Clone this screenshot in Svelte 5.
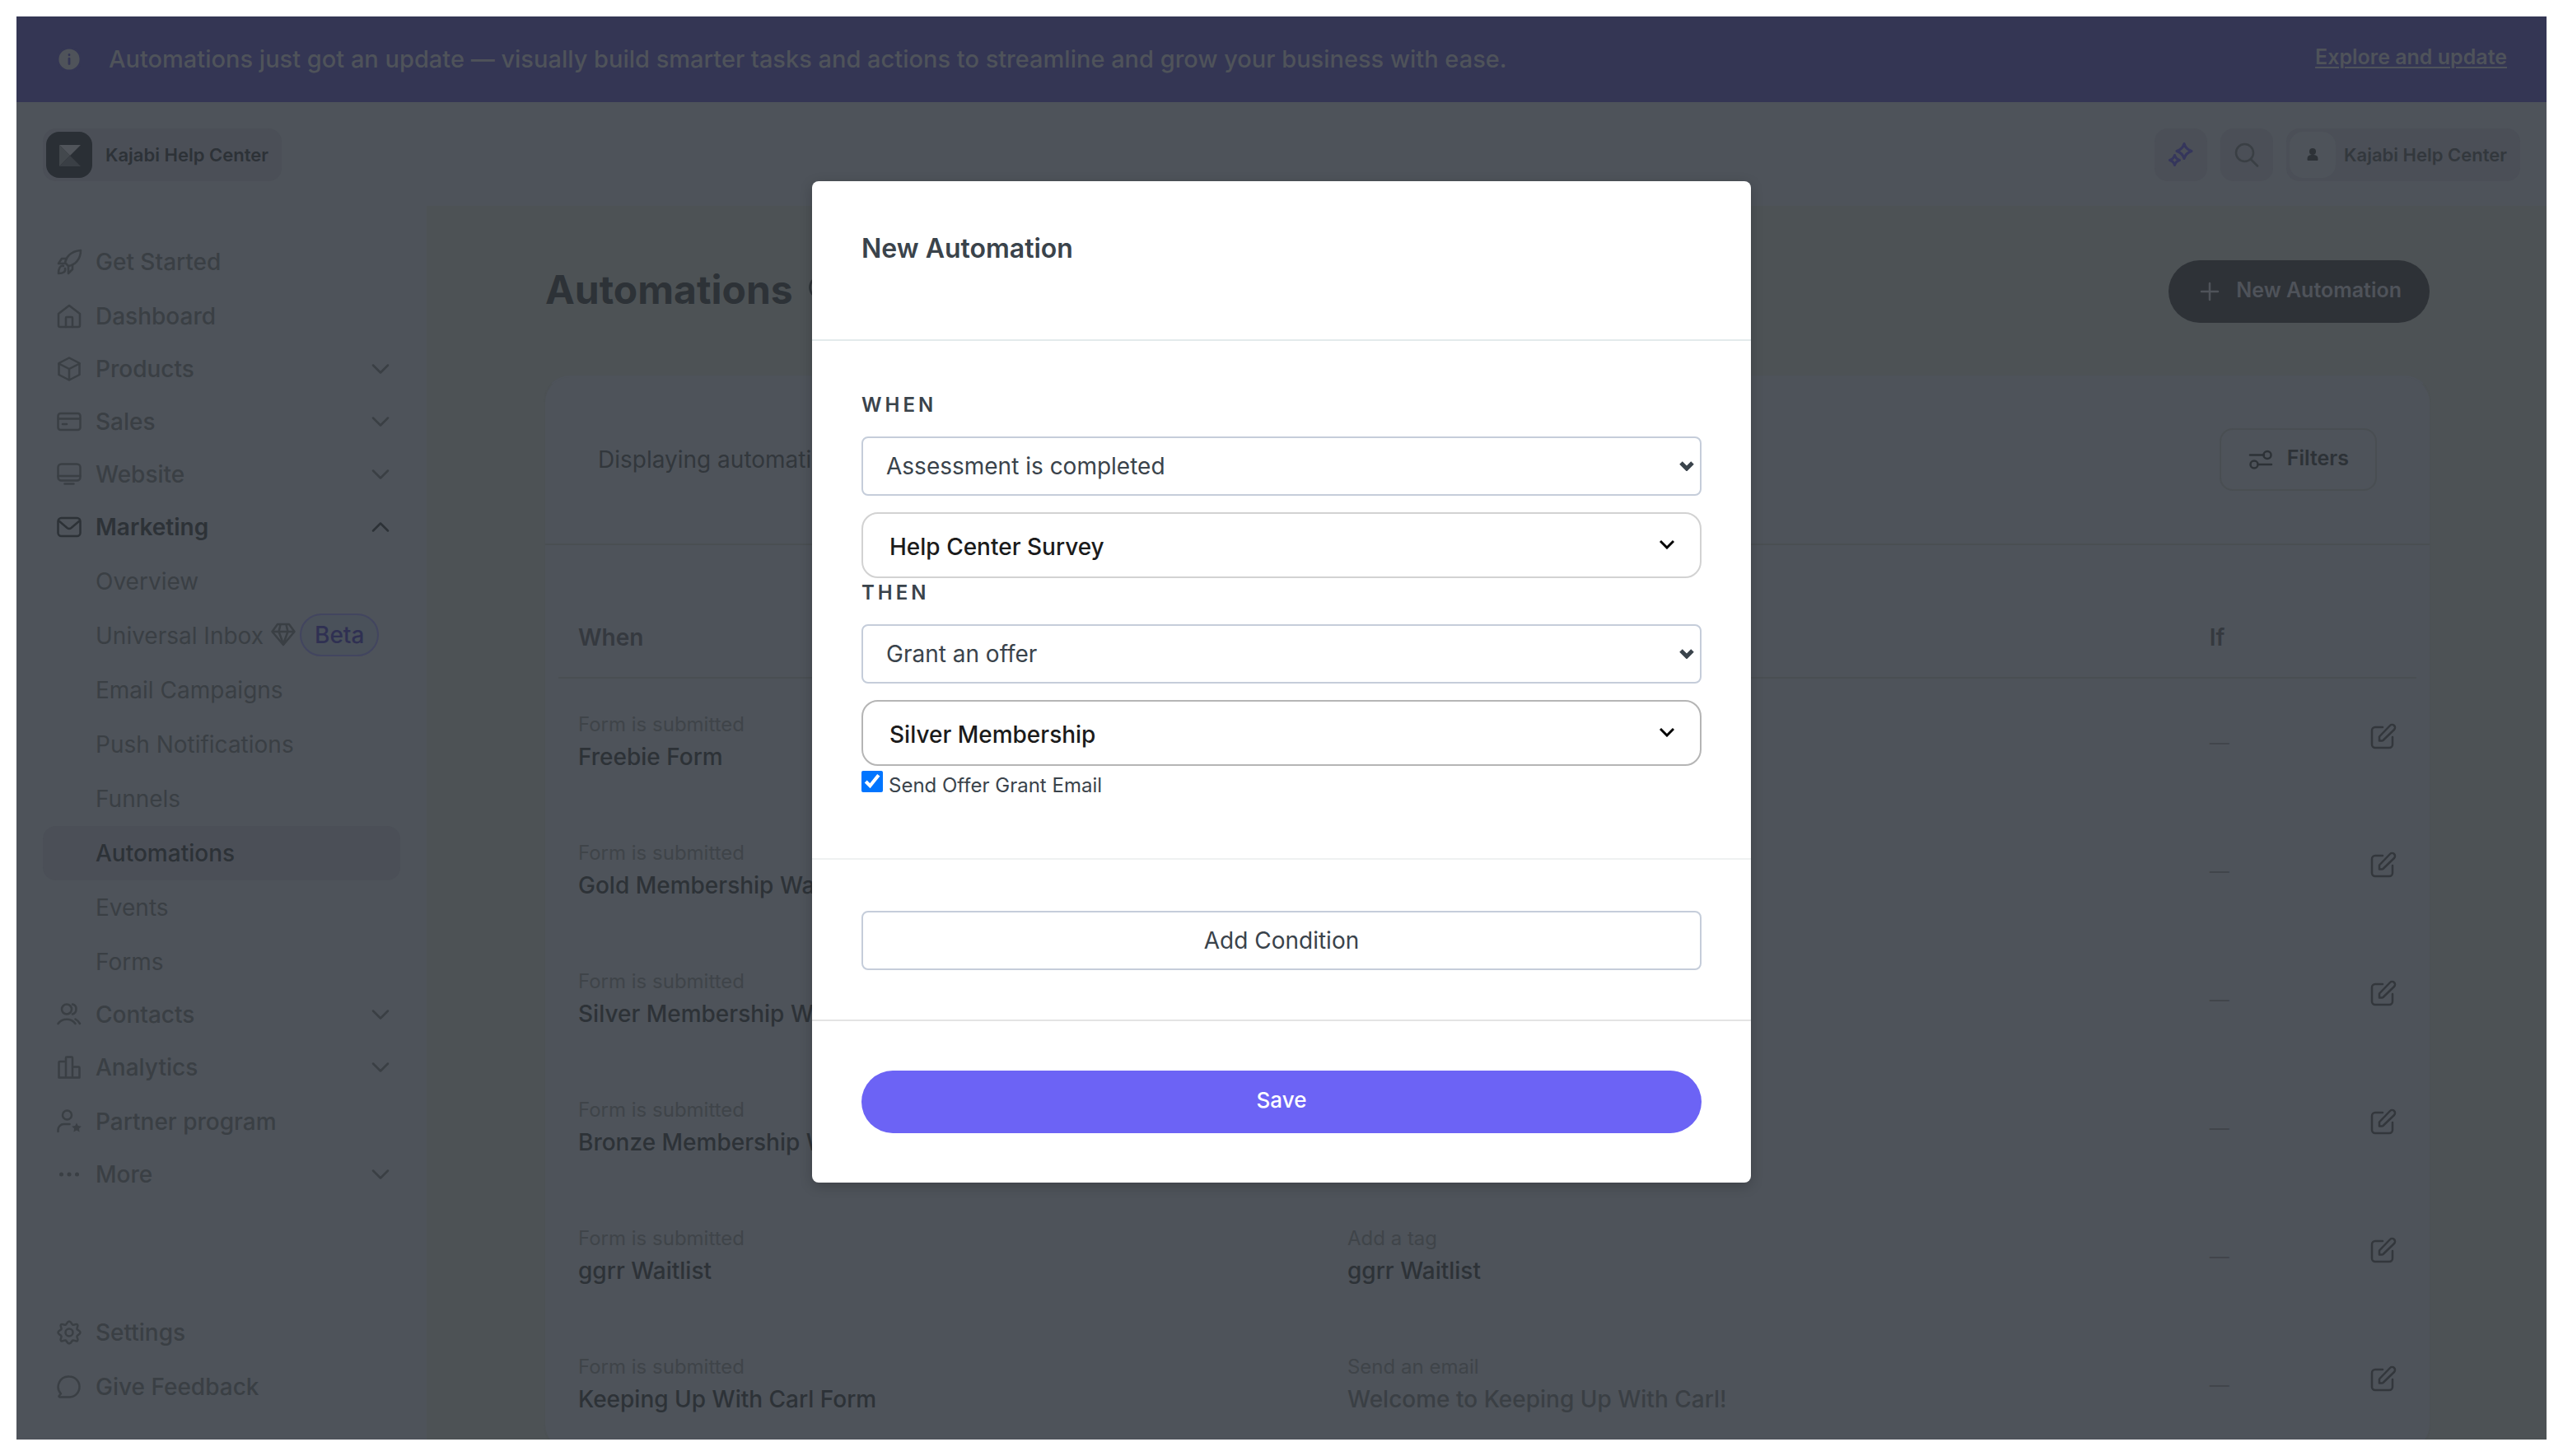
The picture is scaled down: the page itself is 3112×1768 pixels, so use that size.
<script lang="ts">
  type NavItem = {
    label: string;
    icon?: string;
    expandable?: boolean;
    open?: boolean;
    current?: boolean;
    beta?: boolean;
  };

  const nav: NavItem[] = [
    { label: 'Get Started', icon: 'rocket' },
    { label: 'Dashboard', icon: 'home' },
    { label: 'Products', icon: 'box', expandable: true },
    { label: 'Sales', icon: 'card', expandable: true },
    { label: 'Website', icon: 'screen', expandable: true },
    { label: 'Marketing', icon: 'mail', expandable: true, open: true },
    { label: 'Overview' },
    { label: 'Universal Inbox', beta: true },
    { label: 'Email Campaigns' },
    { label: 'Push Notifications' },
    { label: 'Funnels' },
    { label: 'Automations', current: true },
    { label: 'Events' },
    { label: 'Forms' },
    { label: 'Contacts', icon: 'people', expandable: true },
    { label: 'Analytics', icon: 'bars', expandable: true },
    { label: 'Partner program', icon: 'partner' },
    { label: 'More', icon: 'dots', expandable: true }
  ];

  const footerNav: NavItem[] = [
    { label: 'Settings', icon: 'gear' },
    { label: 'Give Feedback', icon: 'chat' }
  ];

  const rows = [
    { when: 'Freebie Form', action: '', target: '', plain: false },
    { when: 'Gold Membership Waitlist', action: '', target: '', plain: false },
    { when: 'Silver Membership Waitlist', action: '', target: '', plain: false },
    { when: 'Bronze Membership Waitlist', action: '', target: '', plain: false },
    { when: 'ggrr Waitlist', action: 'Add a tag', target: 'ggrr Waitlist', plain: false },
    {
      when: 'Keeping Up With Carl Form',
      action: 'Send an email',
      target: 'Welcome to Keeping Up With Carl!',
      plain: true
    }
  ];

  let sendEmail = $state(true);
</script>

{#snippet icon(name: string)}
  <svg class="icon" viewBox="0 0 32 32" aria-hidden="true">
    {#if name === 'rocket'}
      <path d="M11 17c1-6 6-14 19-15 0 12-8 18-15 19z" />
      <path d="M12 12H7l-4 6h7M20 20v5l-5 5v-8M9 21c-4-1-6 3-6 9 6 0 9-2 8-6" />
    {:else if name === 'home'}
      <path d="M3 13 16 3l13 10v14a2 2 0 0 1-2 2H5a2 2 0 0 1-2-2z" />
      <path d="M12 29V18a1 1 0 0 1 1-1h6a1 1 0 0 1 1 1v11" />
    {:else if name === 'box'}
      <path d="M16 2.500 28.500 9v14L16 29.500 3.500 23V9z" />
      <path d="M3.500 9.500 16 16l12.500-6.500M16 16v13" />
    {:else if name === 'card'}
      <rect x="2.500" y="6" width="27" height="20" rx="3" />
      <path d="M3 12.500h26M8 19h5" />
    {:else if name === 'screen'}
      <rect x="2.500" y="3.500" width="27" height="20" rx="4" />
      <path d="M3 18h26M10.500 27.500h11" />
    {:else if name === 'mail'}
      <rect x="2.500" y="5" width="27" height="22" rx="4" />
      <path d="M3.500 8.500 13.500 17a4 4 0 0 0 5 0l10-8.500" />
    {:else if name === 'people'}
      <circle cx="13" cy="9.500" r="6" />
      <path d="M2.500 27c5-7 16-7 21 0M20 3.500c6 1 6 10.500 0 12M23.500 21.500c2 1 4 3 5.500 5.500" />
    {:else if name === 'bars'}
      <path d="M3.500 28.500V10a1 1 0 0 1 1-1H12v19.500M12 9V4.500a1 1 0 0 1 1-1h6a1 1 0 0 1 1 1v24M20 15.500h7.500a1 1 0 0 1 1 1v12h-25" />
    {:else if name === 'partner'}
      <circle cx="13.500" cy="8" r="5.500" />
      <path d="M2.500 28v-2a7 7 0 0 1 7-7h7" />
      <path class="solid" d="m25 17.500 1.800 3.600 4 .6-2.900 2.800.7 4-3.600-1.900-3.600 1.900.7-4-2.900-2.800 4-.6z" />
    {:else if name === 'dots'}
      <circle class="solid" cx="6.500" cy="16" r="2.500" />
      <circle class="solid" cx="16" cy="16" r="2.500" />
      <circle class="solid" cx="25.500" cy="16" r="2.500" />
    {:else if name === 'gear'}
      <circle cx="16" cy="16" r="4.500" />
      <path d="M16 2.500c2.500 0 2.800 3.600 4.400 4.300 1.600.6 4-2 5.600-.4s-1.200 4-.5 5.600c.7 1.600 4 1.500 4 4s-3.300 2.800-4 4.400c-.7 1.600 2.200 3.800.5 5.600-1.700 1.700-4-1.100-5.600-.5-1.600.7-1.900 4-4.400 4s-2.800-3.300-4.400-4c-1.600-.6-3.900 2.200-5.600.5-1.700-1.800 1.200-4 .5-5.600-.7-1.600-4-1.900-4-4.400s3.300-2.400 4-4C7.200 10.400 4.400 8 6 6.400s4 1 5.600.4C13.200 6.100 13.500 2.500 16 2.500z" />
    {:else if name === 'chat'}
      <path d="M16 3.500a12.500 12.500 0 1 1 0 25H4.500c-1 0-1.300-1-.6-1.700l2-2.500A12.500 12.500 0 0 1 16 3.500z" />
    {:else if name === 'gem'}
      <path d="M9 4h14l6.500 9L16 29 2.500 13zM3 13h26M12.500 4.500 10.500 13 16 28l5.500-15-2-8.500" />
    {:else if name === 'sparkle'}
      <path d="M20 2.500c1.500 5 4 7.500 9 9-5 1.500-7.500 4-9 9-1.500-5-4-7.500-9-9 5-1.500 7.500-4 9-9zM8.500 16.500c1 3.500 2.500 5 6 6-3.500 1-5 2.500-6 6-1-3.500-2.500-5-6-6 3.500-1 5-2.500 6-6z" />
    {:else if name === 'search'}
      <circle cx="13.500" cy="13.500" r="10.500" />
      <path d="m21 21.500 8 8" />
    {:else if name === 'person'}
      <circle class="solid" cx="16" cy="12" r="4" />
      <path class="solid" d="M9.500 21.500c0-5 3-5.500 6.500-5.500s6.500.5 6.500 5.500c0 1-.5 1.500-1.500 1.500H11c-1 0-1.500-.5-1.500-1.500z" />
    {:else if name === 'sliders'}
      <path d="M3 10.500h17M12.500 22H29" />
      <circle cx="24" cy="10.500" r="4.500" />
      <circle cx="8" cy="22" r="4.500" />
    {:else if name === 'edit'}
      <path d="M15 5H6a4 4 0 0 0-4 4v17a4 4 0 0 0 4 4h17a4 4 0 0 0 4-4v-9" />
      <path d="M11 16.500 24 3a3.500 3.500 0 0 1 5 5L15.500 21a2 2 0 0 1-1.500.5h-3z" />
    {:else if name === 'plus'}
      <path d="M16 6v20M6 16h20" />
    {:else if name === 'help'}
      <circle cx="16" cy="16" r="13.500" />
      <path d="M12 12.500c0-5 8-5 8 0 0 3-4 3-4 6M16 22.500v.5" />
    {:else if name === 'down'}
      <path d="m7 11.500 9 9 9-9" />
    {:else if name === 'up'}
      <path d="m7 20.500 9-9 9 9" />
    {/if}
  </svg>
{/snippet}

{#snippet navItem(item: NavItem)}
  <li>
    {#if item.expandable}
      <button class="row expandable" class:open={item.open} aria-expanded={!!item.open}>
        {@render icon(item.icon ?? '')}
        <span class="grow">{item.label}</span>
        <span>{@render icon(item.open ? 'up' : 'down')}</span>
      </button>
    {:else}
      <a
        href="#nav"
        class="row"
        class:child={!item.icon}
        class:current={item.current}
        aria-current={item.current ? 'page' : undefined}
      >
        {#if item.icon}{@render icon(item.icon)}{/if}
        <span>{item.label}</span>
        {#if item.beta}
          <span class="gem">{@render icon('gem')}</span>
          <span class="beta">Beta</span>
        {/if}
      </a>
    {/if}
  </li>
{/snippet}

<div class="frame">
  <div class="banner">
    <svg class="info" viewBox="0 0 30 30" aria-hidden="true">
      <circle cx="15" cy="15" r="15" />
      <path d="M15 14v7" />
      <path d="M15 9v.5" />
    </svg>
    <p>
      Automations just got an update — visually build smarter tasks and actions to streamline and
      grow your business with ease.
    </p>
    <a href="#update">Explore and update</a>
  </div>

  <header class="topbar">
    <button class="site">
      <svg class="logo" viewBox="0 0 56 56" aria-hidden="true">
        <rect class="tile" width="56" height="56" rx="16" />
        <path class="k1" d="M16 16h26L29 29z" />
        <path class="k2" d="M16 16l13 13-13 13z" />
        <path class="k3" d="M16 42l13-13 13 13z" />
      </svg>
      <span>Kajabi Help Center</span>
    </button>
    <div class="tools">
      <button class="tool sparkle" aria-label="Assistant">{@render icon('sparkle')}</button>
      <button class="tool" aria-label="Search">{@render icon('search')}</button>
      <button class="account">
        <span class="avatar">{@render icon('person')}</span>
        <span>Kajabi Help Center</span>
      </button>
    </div>
  </header>

  <div class="body">
    <nav class="sidebar" aria-label="Main">
      <ul>
        {#each nav as item}{@render navItem(item)}{/each}
      </ul>
      <ul>
        {#each footerNav as item}{@render navItem(item)}{/each}
      </ul>
    </nav>

    <main>
      <div class="heading">
        <h1>Automations</h1>
        <span class="help">{@render icon('help')}</span>
        <button class="new">{@render icon('plus')}<span>New Automation</span></button>
      </div>

      <section class="card">
        <div class="toolbar">
          <span>Displaying automations</span>
          <button class="filters">{@render icon('sliders')}<span>Filters</span></button>
        </div>
        <div class="table-wrap">
          <table>
            <colgroup>
              <col class="c-when" />
              <col class="c-then" />
              <col class="c-if" />
              <col />
            </colgroup>
            <thead>
              <tr>
                <th scope="col">When</th>
                <th scope="col">Then</th>
                <th scope="col">If</th>
                <td></td>
              </tr>
            </thead>
            <tbody>
              {#each rows as row}
                <tr>
                  <td>
                    <div class="kind">Form is submitted</div>
                    <div class="name">{row.when}</div>
                  </td>
                  <td>
                    {#if row.action}
                      <div class="kind">{row.action}</div>
                      <div class="name" class:plain={row.plain}>{row.target}</div>
                    {/if}
                  </td>
                  <td class="dash">—</td>
                  <td class="edit">
                    <button aria-label="Edit {row.when}">{@render icon('edit')}</button>
                  </td>
                </tr>
              {/each}
            </tbody>
          </table>
        </div>
      </section>
    </main>
  </div>
</div>

<div class="overlay">
  <form class="modal" role="dialog" aria-labelledby="dialog-title">
    <div class="section title">
      <h2 id="dialog-title">New Automation</h2>
    </div>
    <div class="section fields">
      <label class="caps" for="when">WHEN</label>
      <div class="pick">
        <select id="when"><option>Assessment is completed</option></select>
        <svg viewBox="0 0 18 12" aria-hidden="true"><path d="m2 2 7 7 7-7" /></svg>
      </div>
      <div class="pick combo">
        <select aria-label="Assessment"><option>Help Center Survey</option></select>
        <svg viewBox="0 0 18 12" aria-hidden="true"><path d="m1 2 8 8 8-8" /></svg>
      </div>
      <label class="caps" for="then">THEN</label>
      <div class="pick">
        <select id="then"><option>Grant an offer</option></select>
        <svg viewBox="0 0 18 12" aria-hidden="true"><path d="m2 2 7 7 7-7" /></svg>
      </div>
      <div class="pick combo active">
        <select aria-label="Offer"><option>Silver Membership</option></select>
        <svg viewBox="0 0 18 12" aria-hidden="true"><path d="m1 2 8 8 8-8" /></svg>
      </div>
      <label class="check">
        <input type="checkbox" bind:checked={sendEmail} />
        <span>Send Offer Grant Email</span>
      </label>
    </div>
    <div class="section condition">
      <button type="button" class="add">Add Condition</button>
    </div>
    <div class="section last">
      <button type="button" class="save">Save</button>
    </div>
  </form>
</div>

<style>
  :global(body) {
    margin: 0;
    background: #fff;
    font-family: Inter, 'Liberation Sans', sans-serif;
    font-size: 28px;
    line-height: 40px;
  }

  .frame {
    --surface: #4e535a;
    --canvas: #4d5255;
    --line: #494e52;
    --ink: #2d3237;
    --muted: #3a3f44;
    --tint: #4b4f57;
    box-sizing: border-box;
    display: flex;
    flex-direction: column;
    height: calc(100vh - 40px);
    margin: 20px;
    overflow: hidden;
    background: var(--canvas);
    color: var(--muted);
  }

  button {
    padding: 0;
    border: 0;
    background: none;
    color: inherit;
    font: inherit;
    cursor: pointer;
  }

  a {
    color: inherit;
    text-decoration: none;
  }

  h1,
  h2,
  p,
  ul {
    margin: 0;
    padding: 0;
  }

  ul {
    list-style: none;
  }

  .icon {
    display: block;
    flex: none;
    width: 32px;
    height: 32px;
    fill: none;
    stroke: currentColor;
    stroke-width: 2.500;
    stroke-linecap: round;
    stroke-linejoin: round;
  }

  .solid {
    fill: currentColor;
    stroke: none;
  }

  .banner {
    box-sizing: border-box;
    display: flex;
    flex: none;
    align-items: center;
    height: 104px;
    padding: 0 48px 0 50px;
    background: #343654;
    color: #4f535a;
    font-weight: 600;
  }

  .banner p {
    flex: 1;
    margin-left: 34px;
    font-size: 29px;
    font-weight: 450;
  }

  .banner a {
    margin-bottom: 6px;
    font-size: 25px;
    text-decoration: underline;
    text-decoration-thickness: 2px;
    text-underline-offset: 3px;
  }

  .info {
    width: 28px;
    height: 28px;
    fill: #4f535a;
    stroke: #343654;
    stroke-width: 3;
    stroke-linecap: round;
  }

  .topbar {
    box-sizing: border-box;
    display: flex;
    flex: none;
    justify-content: space-between;
    padding: 32px 32px 30px;
    background: var(--surface);
    font-size: 22px;
  }

  .site,
  .account {
    display: flex;
    align-items: center;
    height: 64px;
    border-radius: 16px;
    background: var(--tint);
    font-weight: 600;
  }

  .site {
    gap: 16px;
    padding: 0 16px 0 4px;
    color: var(--ink);
  }

  .logo {
    width: 56px;
    height: 56px;
  }

  .tile {
    fill: #2a2f35;
  }

  .k1 {
    fill: #50545a;
  }

  .k2 {
    fill: #43484d;
  }

  .k3 {
    fill: #3a3f45;
  }

  .tools {
    display: flex;
    gap: 16px;
  }

  .tool {
    display: grid;
    place-items: center;
    width: 64px;
    height: 64px;
    border-radius: 16px;
    background: var(--tint);
  }

  .sparkle {
    color: #35365c;
  }

  .sparkle .icon {
    stroke-width: 3;
  }

  .account {
    gap: 10px;
    padding: 0 16px 0 4px;
    color: #33383d;
  }

  .avatar {
    display: grid;
    place-items: center;
    width: 56px;
    height: 56px;
    border-radius: 16px;
    background: var(--surface);
    color: var(--ink);
  }

  .body {
    display: flex;
    flex: 1;
    min-height: 0;
  }

  .sidebar {
    box-sizing: border-box;
    display: flex;
    flex: none;
    flex-direction: column;
    justify-content: space-between;
    width: 498px;
    padding: 35px 32px 31px;
    background: var(--surface);
  }

  .row {
    box-sizing: border-box;
    display: flex;
    align-items: center;
    width: 100%;
    height: 66px;
    padding: 0 8px 0 16px;
    border-radius: 16px;
    font-weight: 450;
    text-align: left;
  }

  .row > .icon {
    margin-right: 16px;
  }

  .row.child {
    padding-left: 64px;
    font-weight: 400;
  }

  .row.expandable {
    height: 64px;
    padding-bottom: 2px;
  }

  .row.open {
    color: var(--ink);
    font-weight: 600;
  }

  .row.current {
    background: var(--tint);
    color: var(--ink);
    font-weight: 500;
  }

  .grow {
    flex: 1;
  }

  .gem {
    margin: 0 4px 4px 8px;
  }

  .beta {
    margin-bottom: 2px;
    padding: 4px 16px;
    border: 2px solid #42455f;
    border-radius: 26px;
    background: #4a515a;
    color: #2f3052;
    font-weight: 450;
  }

  main {
    flex: 1;
    min-width: 0;
    padding: 66px 140px 0 142px;
  }

  .heading {
    display: flex;
    align-items: center;
    height: 76px;
    margin-bottom: 64px;
    padding: 0 2px;
    color: var(--ink);
  }

  h1 {
    padding-bottom: 4px;
    font-size: 48px;
    line-height: 64px;
    font-weight: 700;
  }

  .help {
    margin: 0 auto 10px 18px;
  }

  .new {
    display: flex;
    align-items: center;
    gap: 16px;
    height: 76px;
    padding: 0 34px;
    border-radius: 38px;
    background: #2e3237;
    color: #4f535a;
    font-size: 25px;
    font-weight: 600;
  }

  .new span,
  .filters span {
    padding-bottom: 4px;
  }

  .card {
    border: 2px solid #4c5154;
    border-top-color: var(--surface);
    border-radius: 32px;
    background: var(--surface);
  }

  .toolbar {
    display: flex;
    align-items: center;
    justify-content: space-between;
    padding: 62px 64px 64px;
    border-bottom: 2px solid var(--line);
    color: #32373c;
  }

  .filters {
    box-sizing: border-box;
    display: flex;
    align-items: center;
    gap: 16px;
    height: 76px;
    padding: 0 32px;
    border: 2px solid var(--line);
    border-radius: 16px;
    color: var(--ink);
    font-size: 25px;
    font-weight: 600;
  }

  .table-wrap {
    padding: 92px 16px 0;
  }

  table {
    width: 100%;
    border-collapse: collapse;
    table-layout: fixed;
  }

  .c-when {
    width: 41.400%;
  }

  .c-then {
    width: 46.400%;
  }

  .c-if {
    width: 6.500%;
  }

  th {
    padding: 0 24px 28px;
    color: #35393f;
    font-weight: 600;
    text-align: left;
  }

  thead tr {
    border-bottom: 2px solid var(--line);
  }

  tbody td {
    padding: 36px 24px 42px;
    white-space: nowrap;
  }

  .kind {
    font-size: 24px;
    line-height: 40px;
    color: #3f4449;
  }

  .name {
    line-height: 38px;
    color: var(--ink);
    font-weight: 500;
  }

  .name.plain {
    color: var(--muted);
    font-weight: 450;
  }

  td.dash {
    padding-top: 39px;
    padding-bottom: 39px;
    color: #41454b;
    font-size: 24px;
  }

  td.edit {
    padding: 28px 24px 44px;
  }

  .edit button {
    display: block;
    margin-left: auto;
    color: #33373c;
  }

  .overlay {
    position: absolute;
    inset: 220px 0 auto;
    display: flex;
    justify-content: center;
  }

  .modal {
    width: 1140px;
    border-radius: 8px;
    background: #fff;
    box-shadow: 0 4px 16px rgba(0, 0, 0, 0.2);
    color: #3a434b;
  }

  .section {
    padding: 60px;
    border-bottom: 2px solid #e3eaec;
  }

  .section.title {
    padding-bottom: 88px;
  }

  .section.fields {
    padding-bottom: 70px;
    border-bottom-color: #eff1f1;
  }

  .section.condition {
    padding-top: 62px;
    border-bottom-color: #e4e4e4;
  }

  .section.last {
    border-bottom: 0;
  }

  h2 {
    font-size: 32px;
    line-height: 44px;
    font-weight: 600;
  }

  .caps {
    display: block;
    margin-bottom: 20px;
    font-size: 24px;
    line-height: 36px;
    font-weight: 600;
    letter-spacing: 4px;
  }

  .pick {
    display: grid;
    align-items: center;
  }

  .pick > * {
    grid-area: 1 / 1;
  }

  .pick svg {
    justify-self: end;
    width: 18px;
    height: 12px;
    margin-right: 9px;
    fill: none;
    stroke: #3a434b;
    stroke-width: 5;
    pointer-events: none;
  }

  select {
    box-sizing: border-box;
    width: 100%;
    height: 72px;
    padding: 0 28px;
    border: 2px solid #c5cdda;
    border-radius: 8px;
    background: #fff;
    color: inherit;
    font: inherit;
    appearance: none;
  }

  .combo {
    margin-top: 20px;
    color: #1b1b1b;
  }

  .combo select {
    height: 80px;
    padding: 4px 32px 0;
    border-color: #d2d2d2;
    border-radius: 20px;
    font-weight: 500;
  }

  .combo.active select {
    border-color: #b5b5b5;
  }

  .combo svg {
    margin-right: 33px;
    margin-bottom: 2px;
    stroke: #000;
    stroke-width: 3;
  }

  .check {
    display: flex;
    align-items: flex-start;
    gap: 7px;
    padding-top: 6px;
    font-size: 24px;
    line-height: 36px;
  }

  .check input {
    width: 26px;
    height: 26px;
    margin: 0;
    accent-color: #0075ff;
  }

  .add,
  .save {
    box-sizing: border-box;
    display: block;
    width: 100%;
  }

  .add {
    height: 72px;
    border: 2px solid #c5cdda;
    border-radius: 8px;
  }

  .save {
    height: 76px;
    padding-bottom: 4px;
    border-radius: 38px;
    background: #6c63f5;
    color: #fff;
    font-size: 26px;
    font-weight: 500;
  }
</style>
